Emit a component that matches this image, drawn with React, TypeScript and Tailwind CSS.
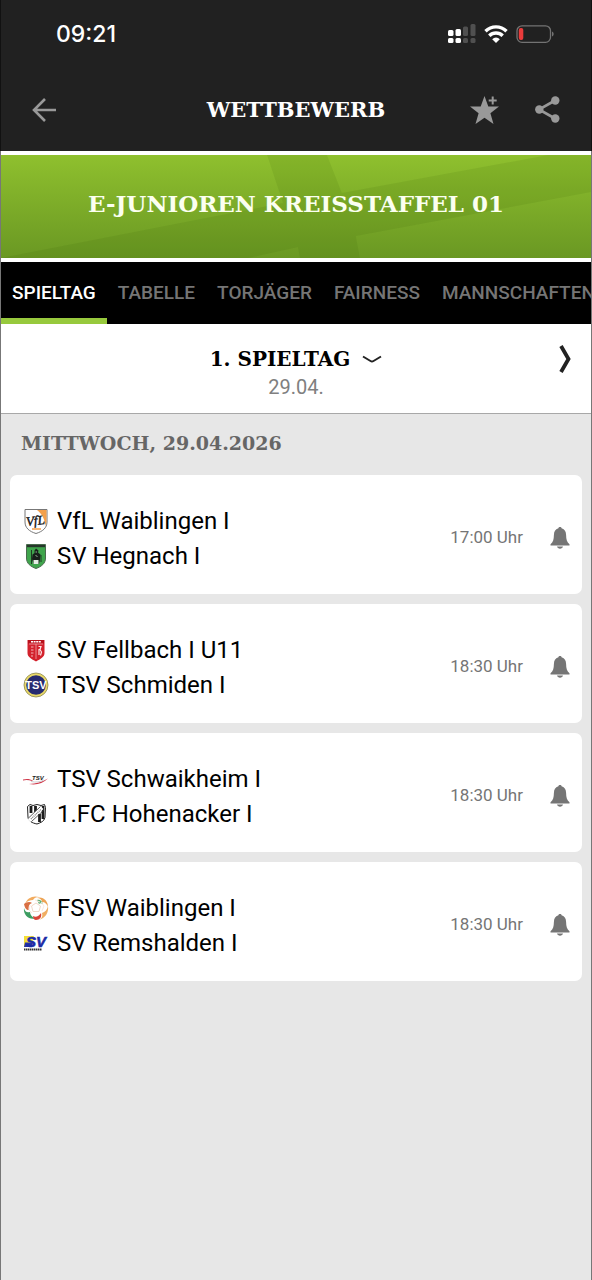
import type { ReactNode } from "react";

const TABS = ["SPIELTAG", "TABELLE", "TORJÄGER", "FAIRNESS", "MANNSCHAFTEN"];

function VflWaiblingenCrest() {
  return (
    <svg viewBox="0 0 26 26" className="size-[26px]" aria-hidden="true">
      <path d="M2 1.500h22v12.500c0 6-4.500 9.500-11 11.500C6.500 23.500 2 20 2 14z" fill="#fff" stroke="#777" />
      <path d="M14 2h9.500v12l-1.500 4C22 11 19 6 14 2z" fill="#f3a04b" />
      <text x="3" y="17" fontSize="13" fontStyle="italic" fontFamily="Liberation Serif, serif" fill="#111" stroke="#111" strokeWidth=".4" transform="rotate(-6 12 13)">VfL</text>
      <path d="M9 21h9" stroke="#f3a04b" strokeWidth="1.500" />
    </svg>
  );
}

function HegnachCrest() {
  return (
    <svg viewBox="0 0 26 26" className="size-[26px]" aria-hidden="true">
      <path d="M3.500 1.500h19V15c0 5.500-4 8.500-9.500 10.500C7.500 23.500 3.500 20.500 3.500 15z" fill="#3fa54c" stroke="#4a6a4e" />
      <path d="M4 2h18v2.200H4z" fill="#26352a" />
      <path d="M11.500 7.500 13 5.500l2.500 2-.5 2 2.500 2-.5 5-1 4.500h-5.500l-1.500-5 .5-4.500 2-1.500z" fill="#17201a" />
      <path d="M8.500 7v14M18 12v7" stroke="#17201a" strokeWidth=".8" />
      <path d="M10.500 17h5v4h-5z" fill="#e4eee4" />
      <path d="M12.500 9h1.500M12.500 12l2 2" stroke="#b9d9bc" strokeWidth=".8" />
    </svg>
  );
}

function FellbachCrest() {
  return (
    <svg viewBox="0 0 26 26" className="size-[26px]" aria-hidden="true">
      <path d="M4.500 3h17v13c0 4-4 6-8.500 8.500C8.500 22 4.500 20 4.500 16z" fill="#d3212c" />
      <path d="M5 3h16v3.500H5z" fill="#b7111c" />
      <path d="M8 4.800h10" stroke="#fff" strokeWidth="1.500" strokeDasharray="2 .6" />
      <path d="M6 7h14M13 7v15" stroke="#f0a5a9" strokeWidth=".8" />
      <path d="M8 10h2.500M8 13h2.500M8 16h2.500M8 19h2" stroke="#f3b4b7" />
      <path d="M15.500 9.500h2.500l-1 3 1.500 2.500-1 3.500M16 12v6" stroke="#fbe6e6" fill="none" strokeWidth="1.200" />
    </svg>
  );
}

function SchmidenCrest() {
  return (
    <svg viewBox="0 0 26 26" className="size-[26px]" aria-hidden="true">
      <circle cx="13" cy="13" r="12" fill="#e9d968" stroke="#8c8650" strokeWidth=".8" />
      <circle cx="13" cy="13" r="9.800" fill="#272b70" />
      <text x="13" y="17" textAnchor="middle" fontSize="11" fontWeight="700" fontFamily="Liberation Sans, sans-serif" fill="#fff">TSV</text>
    </svg>
  );
}

function SchwaikheimCrest() {
  return (
    <svg viewBox="0 0 26 26" className="size-[26px]" aria-hidden="true">
      <path d="M0 13.500c4-1 7-.5 10 1l-1 .5c-3-1-6-1.500-9-.5z" fill="#d0384a" />
      <path d="M6 18c7-.5 13-2 19-5.500-5 5-12 7-19 5.500z" fill="#d0384a" />
      <path d="M8 15.500c5 1 9 .5 13-1.500" stroke="#cfcfd3" fill="none" />
      <text x="9" y="14" fontSize="6" fontWeight="700" fontStyle="italic" fontFamily="Liberation Sans, sans-serif" fill="#222">TSV</text>
    </svg>
  );
}

function HohenackerCrest() {
  return (
    <svg viewBox="0 0 26 26" className="size-[26px]" aria-hidden="true">
      <path d="M4.500 5.500 7 3.500l3 1 4-1 4 1 3.500-1 1 3-.5 10c-1 4-4 5-8 6.500-5-1-8.500-3-9-6.500z" fill="#fff" stroke="#222" />
      <path d="M8 5v7M12.500 5v6M20 5v13M16.500 13v8" stroke="#1b1b1b" strokeWidth="2.800" />
      <path d="M6 19.500 19 6.500" stroke="#fff" strokeWidth="4" />
      <path d="M5 17.500 17.500 5.500M8.500 20.500 21 9" stroke="#333" strokeWidth=".8" />
      <path d="M8 18 18.500 8" stroke="#888" strokeWidth="1.400" strokeDasharray="1 .8" />
    </svg>
  );
}

function FsvCrest() {
  return (
    <svg viewBox="0 0 26 26" className="size-[26px]" aria-hidden="true">
      <path d="M2 9C4 3 10 0 16 2c-3 0-5 1-6 3-3 0-6 1-8 4z" fill="#f2ab5e" />
      <path d="M14 3c6-2 11 3 11 9-1-3-3-5-6-5 0-2-2-4-5-4z" fill="#eda455" />
      <path d="M25 11c1 7-3 12-9 14 3-2 4-4 3-7 3-1 5-3 6-7z" fill="#f0ae62" />
      <path d="M1 9c2-2 6-3 8-1-3 1-4 4-3 7-3 0-4-2-5-6z" fill="#d96f42" />
      <path d="M1 13c1 4 3 5 6 4 0 3 2 5 5 6.500C6 25 0 20 1 13z" fill="#3d9d62" />
      <path d="M10 21c3 2 6 0 8-3 1 4-1 7-5 7-2 0-3-2-3-4z" fill="#d94438" />
      <path d="M14 5c3-1 5 1 6 4-2-1-3-1-4 0z" fill="#5fae76" />
      <path d="m13 8 4.500 3-1.500 5.500h-6L8.500 11z" fill="#fff" stroke="#f0d8c8" />
      <path d="m18 7 3 4-2 5M7 10l-1 5 3 3M12 5l5 2" stroke="#fbe9df" fill="none" />
    </svg>
  );
}

function RemshaldenCrest() {
  return (
    <svg viewBox="0 0 26 26" className="size-[26px]" aria-hidden="true">
      <path d="M1 6h10l-3 11H1z" fill="#f3df35" />
      <path d="M2 12.500h8l-1 4.500H1z" fill="#2432a8" />
      <text x="3" y="17" fontSize="15" fontWeight="700" fontStyle="italic" fontFamily="Liberation Sans, sans-serif" fill="#1c2ba5" stroke="#1c2ba5" strokeWidth=".6">SV</text>
      <path d="M1 19.500h18" stroke="#333" strokeWidth="2" strokeDasharray="1.500 .5" />
    </svg>
  );
}

type Team = { name: string; crest: ReactNode };

const MATCHES: { time: string; teams: Team[] }[] = [
  {
    time: "17:00 Uhr",
    teams: [
      { name: "VfL Waiblingen I", crest: <VflWaiblingenCrest /> },
      { name: "SV Hegnach I", crest: <HegnachCrest /> },
    ],
  },
  {
    time: "18:30 Uhr",
    teams: [
      { name: "SV Fellbach I U11", crest: <FellbachCrest /> },
      { name: "TSV Schmiden I", crest: <SchmidenCrest /> },
    ],
  },
  {
    time: "18:30 Uhr",
    teams: [
      { name: "TSV Schwaikheim I", crest: <SchwaikheimCrest /> },
      { name: "1.FC Hohenacker I", crest: <HohenackerCrest /> },
    ],
  },
  {
    time: "18:30 Uhr",
    teams: [
      { name: "FSV Waiblingen I", crest: <FsvCrest /> },
      { name: "SV Remshalden I", crest: <RemshaldenCrest /> },
    ],
  },
];

function StatusBar() {
  return (
    <div className="flex h-[68px] items-center justify-between pr-[37px] pl-[55px]">
      <span className="font-['Inter',sans-serif] text-[23px] font-medium text-white">09:21</span>
      <div className="flex items-center gap-2">
        <svg viewBox="0 0 28 20" className="h-5 w-7" aria-hidden="true">
          <g fill="#fff">
            <rect x="0" y="6" width="5.500" height="6" rx="1.500" />
            <rect x="7.500" y="5" width="5.500" height="7" rx="1.500" />
            <rect x="0" y="14" width="5.500" height="5" rx="1.500" />
            <rect x="7.500" y="14" width="5.500" height="5" rx="1.500" />
          </g>
          <g fill="#505050">
            <rect x="15" y="2.500" width="5" height="9.500" rx="1.500" />
            <rect x="22.500" y="0" width="5" height="12" rx="1.500" />
            <rect x="15" y="14" width="5" height="5" rx="1.500" />
            <rect x="22.500" y="14" width="5" height="5" rx="1.500" />
          </g>
        </svg>
        <svg viewBox="0 0 24 18" className="h-[18px] w-6" fill="none" stroke="#fff" strokeWidth="3.400" aria-hidden="true">
          <path d="M1.500 6.200a15 15 0 0 1 21 0M5.300 10.700a9.600 9.600 0 0 1 13.400 0" />
          <path d="m12 18-3.800-3.800a5.300 5.300 0 0 1 7.600 0z" fill="#fff" stroke="none" />
        </svg>
        <svg viewBox="0 0 38 18" className="h-[18px] w-[38px]" aria-hidden="true">
          <rect x="1" y=".8" width="33.500" height="16.500" rx="5" fill="none" stroke="#737373" strokeWidth="1.300" />
          <rect x="2.800" y="3" width="4.500" height="12" rx="2" fill="#ea3b3b" />
          <path d="M36 6.500c2.200.8 2.200 4.200 0 5z" fill="#737373" />
        </svg>
      </div>
    </div>
  );
}

function Header() {
  return (
    <header className="grid h-[83px] grid-cols-[1fr_auto_1fr] items-center px-[31px]">
      <button type="button" aria-label="Zurück" className="w-6">
        <svg viewBox="0 0 24 24" className="size-6" fill="none" stroke="#999" strokeWidth="2.600" aria-hidden="true">
          <path d="M24 12H2M13 1 2 12l11 11" />
        </svg>
      </button>
      <h1 className="font-['DejaVu_Serif',serif] text-[21px] font-bold text-white">WETTBEWERB</h1>
      <div className="flex items-center justify-end gap-9">
        <button type="button" aria-label="Als Favorit merken">
          <svg viewBox="0 0 29 28" className="h-7 w-[29px]" aria-hidden="true">
            <path d="m14.500 0 3.800 10.500H29l-8.600 6.700L23.500 28l-9-6.300-9 6.300 3.100-10.800L0 10.500h10.700z" fill="#999" />
            <path d="M22.700.5v8M18.700 4.500h8" stroke="#212121" strokeWidth="5" />
            <path d="M22.700.5v8M18.700 4.500h8" stroke="#999" strokeWidth="2" />
          </svg>
        </button>
        <button type="button" aria-label="Teilen">
          <svg viewBox="0 0 25 27" className="h-[27px] w-[25px]" fill="#999" aria-hidden="true">
            <path d="M20 4.500 4 13.500l16 9" fill="none" stroke="#999" strokeWidth="2.600" />
            <circle cx="20.300" cy="4.500" r="4.200" />
            <circle cx="4.300" cy="13.500" r="4.200" />
            <circle cx="20.300" cy="22.500" r="4.200" />
          </svg>
        </button>
      </div>
    </header>
  );
}

function Banner() {
  return (
    <section className="relative flex h-[111px] items-center justify-center border-y-4 border-white bg-linear-to-b from-[#8fc02e] to-[#6a9823] pb-1">
      <svg viewBox="0 0 592 103" preserveAspectRatio="none" className="absolute inset-0 size-full" fill="#2d5a00" fillOpacity=".1" aria-hidden="true">
        <path d="M267 0h60l15 38L549 0h43v37L356 81l4 22h-60l-2-11-50 11H0L283 48z" />
      </svg>
      <h2 className="relative font-['DejaVu_Serif',serif] text-[23px] font-bold whitespace-nowrap text-[#fbfff0]">E-JUNIOREN KREISSTAFFEL 01</h2>
    </section>
  );
}

function MatchCard({ time, teams }: { time: string; teams: Team[] }) {
  return (
    <li className="flex items-center rounded-[7px] bg-white pt-7 pr-3 pb-[21px] pl-[13px]">
      <a href="#spiel" className="flex flex-1 items-center justify-between text-black">
        <div>
          {teams.map((t) => (
            <div key={t.name} className="flex h-[35px] items-center gap-2 text-[24px]">
              {t.crest}
              <span>{t.name}</span>
            </div>
          ))}
        </div>
        <span className="text-[17px] text-[#757575]">{time}</span>
      </a>
      <button type="button" aria-label="Erinnerung" className="ml-[27px]">
        <svg viewBox="0 0 20 22" className="h-[22px] w-5" fill="#757575" aria-hidden="true">
          <path d="M10 0c.9 0 1.500.5 1.600 1.200C14.800 2 16 4.500 16.100 8c.1 4.500.7 7.200 3.400 9.300v1.200H.5v-1.200C3.200 15.200 3.800 12.500 3.900 8 4 4.500 5.200 2 8.400 1.200 8.500.5 9.100 0 10 0z" />
          <path d="M7 19.500h6c-.4 1.400-1.500 2.200-3 2.200s-2.600-.8-3-2.200z" />
        </svg>
      </button>
    </li>
  );
}

export default function App() {
  return (
    <div className="flex min-h-screen flex-col overflow-hidden bg-[#e7e7e7] font-['Roboto',sans-serif]">
      <div className="border-x border-[#111] bg-[#212121]">
        <StatusBar />
        <Header />
      </div>
      <main className="flex-1 border-x border-[#777]">
        <Banner />
        <nav className="flex h-[62px] overflow-hidden bg-black text-[19px] font-medium">
          {TABS.map((tab, i) => (
            <a
              key={tab}
              href={`#${tab.toLowerCase()}`}
              aria-current={i === 0 ? "page" : undefined}
              className={
                i === 0
                  ? "flex shrink-0 items-center border-b-6 border-[#97c93d] px-[11px] pt-[6px] text-white"
                  : "flex shrink-0 items-center px-[11px] text-[#757575]"
              }
            >
              {tab}
            </a>
          ))}
        </nav>

        <section className="grid h-[90px] grid-cols-[1fr_auto_1fr] border-b border-[#a8a8a8] bg-white">
          <div className="col-start-2 pt-[21px] text-center">
            <button type="button" className="flex items-center gap-3 font-['DejaVu_Serif',serif] text-[20px] leading-7 font-bold text-black">
              1. SPIELTAG
              <svg viewBox="0 0 20 8" className="h-2 w-5" fill="none" stroke="#222" strokeWidth="2" aria-hidden="true">
                <path d="m1 1.500 7.500 4.500c1 .6 2 .6 3 0L19 1.500" />
              </svg>
            </button>
            <p className="text-[20px] leading-7 text-[#808080]">29.04.</p>
          </div>
          <button type="button" aria-label="Nächster Spieltag" className="mt-[21px] mr-5 self-start justify-self-end">
            <svg viewBox="0 0 12 28" className="h-7 w-3" fill="none" stroke="#222" strokeWidth="3.800" aria-hidden="true">
              <path d="m2 1 7.500 13L2 27" />
            </svg>
          </button>
        </section>

        <h3 className="px-5 pt-4 pb-[19px] font-['DejaVu_Serif',serif] text-[19px] leading-[26px] font-bold text-[#666]">
          MITTWOCH, 29.04.2026
        </h3>
        <ul className="flex flex-col gap-[10px] px-[9px]">
          {MATCHES.map((m) => (
            <MatchCard key={m.teams[0].name} time={m.time} teams={m.teams} />
          ))}
        </ul>
      </main>
    </div>
  );
}
